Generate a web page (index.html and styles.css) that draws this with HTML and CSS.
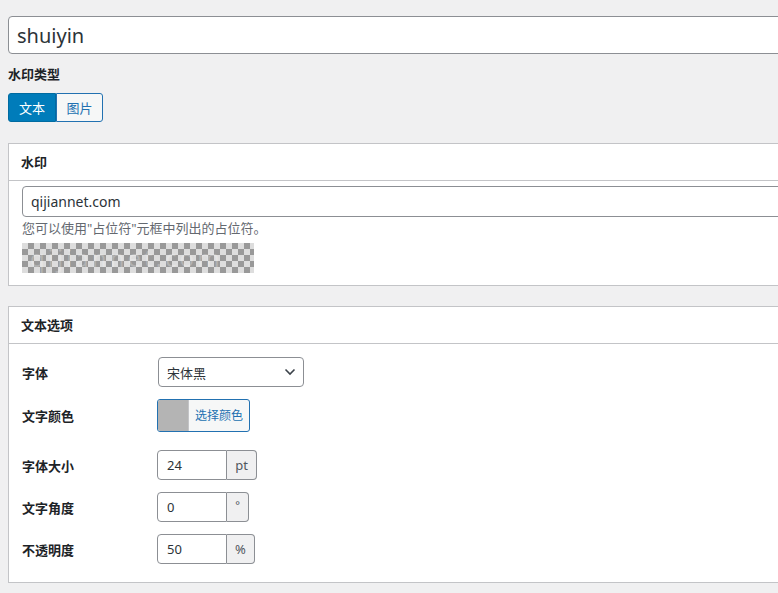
FILE: index.html
```html
<!DOCTYPE html>
<html lang="zh-CN">
<head>
    <meta charset="UTF-8">
    <meta name="viewport" content="width=device-width, initial-scale=1.0">
    <title>水印设置</title>
    <link rel="stylesheet" href="styles.css">
</head>
<body>
    <div class="wrap">
        <input class="title-input" type="text" value="shuiyin">

        <div class="type-label">水印类型</div>
        <div class="btn-group">
            <button class="seg active">文本</button>
            <button class="seg">图片</button>
        </div>

        <div class="panel">
            <div class="panel-head">水印</div>
            <div class="panel-body first">
                <input class="text-input" type="text" value="qijiannet.com">
                <p class="help">您可以使用"占位符"元框中列出的占位符。</p>
                <div class="preview"><span>qijiannet.com</span></div>
            </div>
        </div>

        <div class="panel second">
            <div class="panel-head">文本选项</div>
            <div class="panel-body options">
                <div class="row">
                    <label>字体</label>
                    <div class="select">
                        <span>宋体黑</span>
                        <svg width="12" height="8" viewBox="0 0 12 8"><path d="M1.5 1.5 6 6l4.5-4.5" fill="none" stroke="#3c434a" stroke-width="1.6"/></svg>
                    </div>
                </div>
                <div class="row color-row">
                    <label>文字颜色</label>
                    <button class="color-btn"><span class="swatch"></span><span class="pick">选择颜色</span></button>
                </div>
                <div class="row">
                    <label>字体大小</label>
                    <div class="group"><span class="num">24</span><span class="addon w30">pt</span></div>
                </div>
                <div class="row">
                    <label>文字角度</label>
                    <div class="group"><span class="num">0</span><span class="addon w22">°</span></div>
                </div>
                <div class="row last">
                    <label>不透明度</label>
                    <div class="group"><span class="num">50</span><span class="addon w28">%</span></div>
                </div>
            </div>
        </div>
    </div>
</body>
</html>
```

FILE: styles.css
```css
html, body {
    margin: 0;
    overflow: hidden;
    background: #f0f0f1;
}
body {
    font-family: "Noto Sans", "Noto Sans CJK SC", sans-serif;
    font-size: 13px;
    color: #3c434a;
}
.wrap {
    width: 830px;
    padding: 16px 0 0 8px;
}
.title-input {
    display: block;
    box-sizing: border-box;
    width: 100%;
    height: 38px;
    margin: 0;
    padding: 0 8px;
    border: 1px solid #8c8f94;
    border-radius: 4px;
    background: #fff;
    font-family: inherit;
    font-size: 20px;
    color: #2c3338;
}
.type-label {
    margin-top: 11px;
    font-weight: bold;
    font-size: 13px;
    line-height: 18px;
    color: #1d2327;
}
.btn-group {
    display: flex;
    margin-top: 10px;
}
.seg {
    box-sizing: border-box;
    height: 29px;
    width: 48px;
    padding: 0;
    margin: 0;
    border: 1px solid #2271b1;
    background: #f6f7f7;
    color: #2271b1;
    font-family: inherit;
    font-size: 13px;
}
.seg:first-child { border-radius: 3px 0 0 3px; }
.seg:last-child { border-radius: 0 3px 3px 0; width: 47px; }
.seg.active {
    background: #007cba;
    border-color: #006ba1;
    color: #fff;
}
.panel {
    margin-top: 21px;
    background: #fff;
    border: 1px solid #c3c4c7;
}
.panel.second { margin-top: 20px; }
.panel-head {
    height: 36px;
    line-height: 36px;
    padding: 0 12px;
    border-bottom: 1px solid #c3c4c7;
    font-weight: bold;
    color: #1d2327;
}
.panel-body.first {
    padding: 5px 0 12px 13px;
}
.text-input {
    display: block;
    box-sizing: border-box;
    width: 100%;
    height: 31px;
    margin: 0;
    padding: 0 8px;
    border: 1px solid #8c8f94;
    border-radius: 4px;
    font-family: inherit;
    font-size: 14px;
    color: #2c3338;
}
.help {
    margin: 3px 0 7px;
    line-height: 16px;
    color: #646970;
}
.preview {
    width: 232px;
    height: 30px;
    background: repeating-conic-gradient(#999 0 25%, #ddd 0 50%) 0 0 / 12px 12px;
}
.preview span {
    display: block;
    font-size: 24px;
    line-height: 30px;
    letter-spacing: 3px;
    padding-left: 8px;
    color: rgba(255, 255, 255, 0.25);
}
.panel-body.options {
    padding: 13px 0 18px 13px;
}
.row {
    display: flex;
    align-items: center;
    margin-bottom: 12px;
}
.row.color-row { margin-bottom: 18px; }
.row.last { margin-bottom: 0; }
.row label {
    width: 135px;
    font-weight: bold;
    color: #1d2327;
}
.select {
    box-sizing: border-box;
    display: flex;
    align-items: center;
    justify-content: space-between;
    width: 146px;
    height: 30px;
    margin-left: 1px;
    padding: 0 7px 0 8px;
    border: 1px solid #8c8f94;
    border-radius: 4px;
    color: #2c3338;
    font-size: 13px;
}
.color-btn {
    box-sizing: border-box;
    display: flex;
    width: 93px;
    height: 33px;
    padding: 0;
    margin: 0;
    border: 1px solid #2271b1;
    border-radius: 3px;
    background: #f6f7f7;
    overflow: hidden;
    font-family: inherit;
}
.swatch {
    width: 30px;
    height: 100%;
    background: #b4b4b4;
    border-right: 1px solid #c3c4c7;
}
.pick {
    flex: 1;
    line-height: 31px;
    font-size: 12px;
    color: #2271b1;
    text-align: center;
}
.group {
    display: flex;
    height: 30px;
}
.num {
    box-sizing: border-box;
    width: 70px;
    padding-left: 9px;
    line-height: 28px;
    border: 1px solid #8c8f94;
    border-radius: 4px 0 0 4px;
    color: #2c3338;
    font-size: 13px;
}
.addon {
    box-sizing: border-box;
    line-height: 28px;
    text-align: center;
    border: 1px solid #8c8f94;
    border-left: 0;
    border-radius: 0 4px 4px 0;
    background: #f0f0f1;
    color: #50575e;
}
.w30 { width: 30px; }
.w22 { width: 22px; font-size: 11px; line-height: 24px; }
.w28 { width: 28px; }
```
